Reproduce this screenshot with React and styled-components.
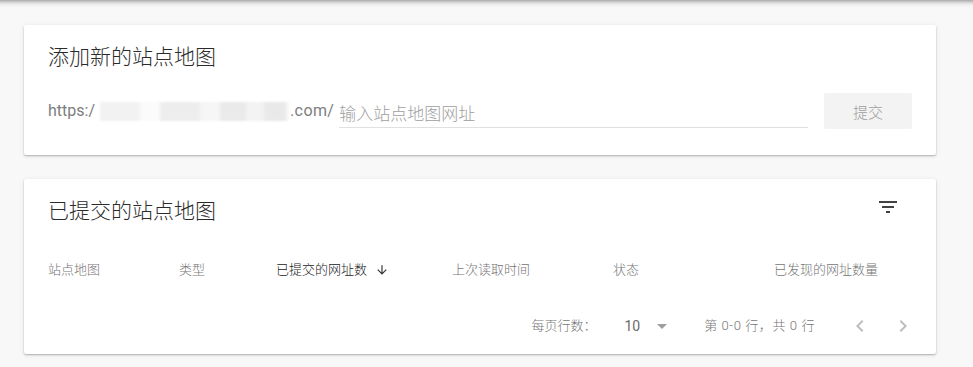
import React from "react";
import styled, { createGlobalStyle } from "styled-components";

const Global = createGlobalStyle`
  html, body { margin: 0; padding: 0; }
  body {
    background: #f8f8f8;
    font-family: Roboto, "Noto Sans CJK SC", "Noto Sans", sans-serif;
    color: #212121;
    overflow: hidden;
  }
`;

const Page = styled.div`
  width: 973px;
  height: 367px;
  background: #f8f8f8;
`;

const TopShadow = styled.div`
  height: 8px;
  background: linear-gradient(#a9a9a9 0px, #cfcfcf 2px, #e9e9e9 4px, #f4f4f4 6px, #f8f8f8 8px);
`;

const Content = styled.div`
  display: flex;
  flex-direction: column;
  gap: 24px;
  padding: 17px 37px 0 24px;
`;

const Card = styled.section`
  background: #fff;
  border-radius: 2px;
  box-shadow: 0 1px 2px rgba(0, 0, 0, 0.28), 0 1px 6px rgba(0, 0, 0, 0.06);
  display: flex;
  flex-direction: column;
`;

const AddCard = styled(Card)`
  padding: 20px 24px 26px;
  height: 130px;
  box-sizing: border-box;
`;

const Title = styled.h2`
  margin: 0;
  font-weight: 300;
  font-size: 21px;
  line-height: 24px;
  color: #2b2b2b;
`;

const InputRow = styled.div`
  display: flex;
  align-items: center;
  height: 36px;
  margin-top: 24px;
`;

const Prefix = styled.span`
  font-size: 16px;
  color: #7d7d7d;
  line-height: 20px;
  white-space: nowrap;
  letter-spacing: ${(p) => p.$spacing || "0"};
`;

const Blur = styled.span`
  display: inline-block;
  width: 190px;
  height: 19px;
  margin: 0 0 0 5px;
  filter: blur(1px);
  background: linear-gradient(
    to right,
    #f2f2f2 0px, #f2f2f2 38px,
    #fbfbfb 42px, #fbfbfb 58px,
    #ededed 62px, #ededed 98px,
    #f6f6f6 102px, #f6f6f6 118px,
    #eaeaea 122px, #eaeaea 144px,
    #f3f3f3 148px, #f3f3f3 162px,
    #e9e9e9 166px, #e9e9e9 184px,
    #ffffff 190px
  );
`;

const Field = styled.div`
  flex: 0 0 469px;
  margin-left: 5px;
  display: flex;
  align-items: center;
  border-bottom: 1px solid #e0e0e0;
  box-sizing: border-box;
  height: 34px;
`;

const Placeholder = styled.span`
  font-size: 17px;
  font-weight: 300;
  line-height: 20px;
  color: #9e9e9e;
  padding-top: 6px;
`;

const SubmitButton = styled.button`
  margin-left: auto;
  width: 88px;
  height: 36px;
  border: none;
  border-radius: 2px;
  background: #f3f3f3;
  color: #9e9e9e;
  font-family: inherit;
  font-weight: 300;
  font-size: 15px;
  cursor: default;
`;

const ListCard = styled(Card)`
  height: 175px;
`;

const TitleBar = styled.div`
  height: 63px;
  display: flex;
  align-items: center;
  justify-content: space-between;
  padding: 0 36px 0 24px;
`;

const IconButton = styled.span`
  display: inline-flex;
  width: 24px;
  height: 24px;
  margin-top: -8px;
  color: #424242;
`;

const HeaderRow = styled.div`
  height: 56px;
  display: grid;
  grid-template-columns: 131px 97px 176px 161px 1fr auto;
  align-items: center;
  padding: 0 58px 0 24px;
`;

const HeaderCell = styled.div`
  font-size: 13px;
  font-weight: 300;
  line-height: 16px;
  color: ${(p) => (p.$active ? "#212121" : "#757575")};
  display: flex;
  align-items: center;
  justify-content: ${(p) => (p.$right ? "flex-end" : "flex-start")};
  gap: 8px;
`;

const Pager = styled.div`
  height: 56px;
  display: flex;
  align-items: center;
  justify-content: flex-end;
  padding: 0 21px 0 24px;
  font-size: 13px;
  font-weight: 300;
  color: #757575;
`;

const PagerLabel = styled.span`
  line-height: 16px;
`;

const PerPage = styled.span`
  display: inline-flex;
  align-items: center;
  margin-left: 28px;
  color: #6a6a6a;
  font-size: 14px;
  font-weight: 400;
  gap: 17px;
`;

const Range = styled.span`
  margin-left: 37px;
  line-height: 16px;
  letter-spacing: 0.6px;
`;

const Nav = styled.span`
  display: inline-flex;
  gap: 19px;
  margin-left: 33px;
  color: #bdbdbd;
`;

const FilterIcon = () => (
  <svg width="24" height="24" viewBox="0 0 24 24" fill="currentColor">
    <path d="M10 18h4v-2h-4v2zM3 6v2h18V6H3zm3 7h12v-2H6v2z" />
  </svg>
);

const ArrowDown = () => (
  <svg width="14" height="14" viewBox="0 0 24 24" fill="#333">
    <path d="M20 12l-1.41-1.41L13 16.17V4h-2v12.17l-5.58-5.59L4 12l8 8 8-8z" />
  </svg>
);

const Caret = () => (
  <svg width="10" height="10" viewBox="0 0 10 10" fill="#9e9e9e">
    <path d="M0 3h10L5 8z" />
  </svg>
);

const ChevronLeft = () => (
  <svg width="24" height="24" viewBox="0 0 24 24" fill="currentColor">
    <path d="M15.41 7.41L14 6l-6 6 6 6 1.41-1.41L10.83 12z" />
  </svg>
);

const ChevronRight = () => (
  <svg width="24" height="24" viewBox="0 0 24 24" fill="currentColor">
    <path d="M10 6L8.59 7.41 13.17 12l-4.58 4.59L10 18l6-6z" />
  </svg>
);

export default function App() {
  return (
    <Page>
      <Global />
      <TopShadow />
      <Content>
        <AddCard>
          <Title>添加新的站点地图</Title>
          <InputRow>
            <Prefix>https:/</Prefix>
            <Blur />
            <Prefix $spacing="0.4px">.com/</Prefix>
            <Field>
              <Placeholder>输入站点地图网址</Placeholder>
            </Field>
            <SubmitButton>提交</SubmitButton>
          </InputRow>
        </AddCard>
        <ListCard>
          <TitleBar>
            <Title>已提交的站点地图</Title>
            <IconButton>
              <FilterIcon />
            </IconButton>
          </TitleBar>
          <HeaderRow>
            <HeaderCell>站点地图</HeaderCell>
            <HeaderCell>类型</HeaderCell>
            <HeaderCell $active>
              已提交的网址数
              <ArrowDown />
            </HeaderCell>
            <HeaderCell>上次读取时间</HeaderCell>
            <HeaderCell>状态</HeaderCell>
            <HeaderCell $right>已发现的网址数量</HeaderCell>
          </HeaderRow>
          <Pager>
            <PagerLabel>每页行数：</PagerLabel>
            <PerPage>
              10
              <Caret />
            </PerPage>
            <Range>第 0-0 行，共 0 行</Range>
            <Nav>
              <ChevronLeft />
              <ChevronRight />
            </Nav>
          </Pager>
        </ListCard>
      </Content>
    </Page>
  );
}
